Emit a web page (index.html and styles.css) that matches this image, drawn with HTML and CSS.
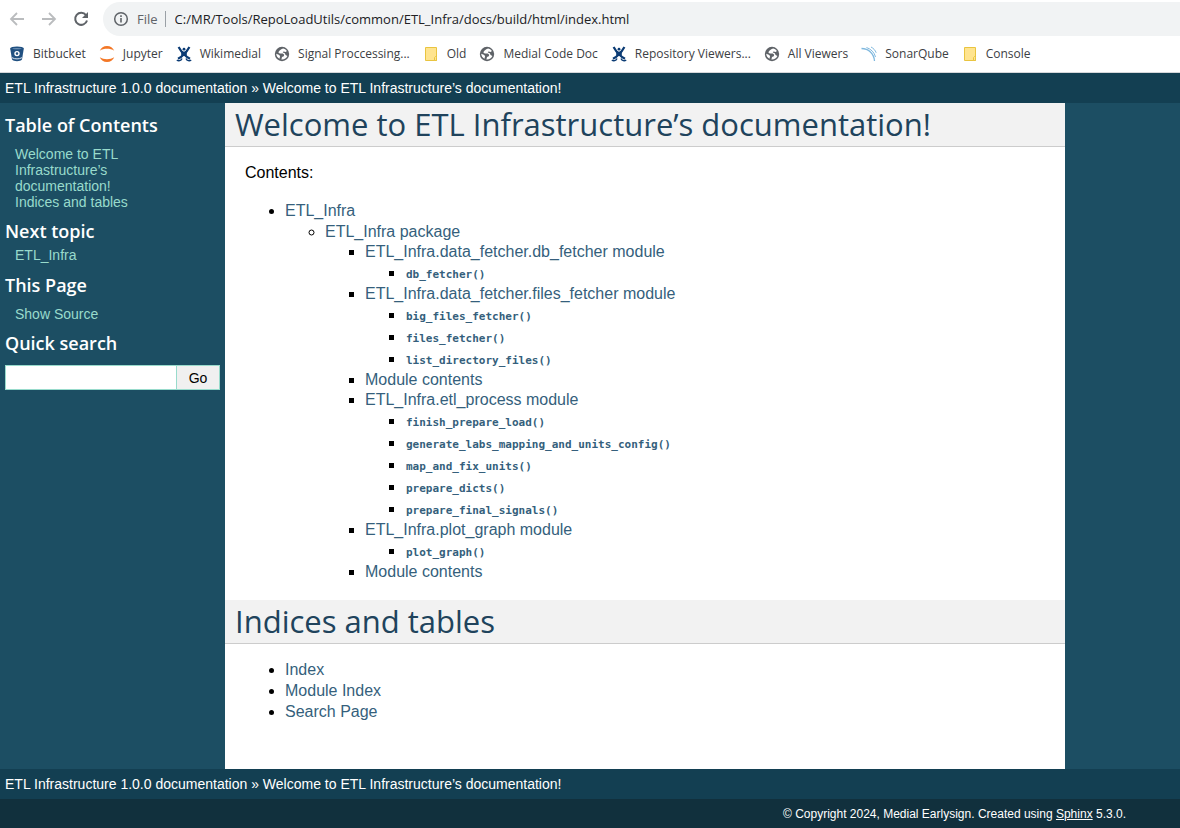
FILE: index.html
```html
<!DOCTYPE html>
<html lang="en">
<head>
<meta charset="utf-8">
<title>Welcome to ETL Infrastructure’s documentation!</title>
<link rel="stylesheet" href="styles.css">
</head>
<body>
<svg class="symbols" aria-hidden="true">
  <symbol id="globe" viewBox="0 0 16 16"><circle cx="8" cy="8" r="7.200" fill="#5f6368"/><path d="M9.200 2.600C7 3 6 4.200 4.800 5.600c-.8 1 .2 2 1.400 2h2.600l1.400 1.200-.4 1.400-1.800.8-.6 2.500c2.800.2 5-1.100 6-3.500L11.600 9l-.8-1.800-2-.6.6-1 2.600.4.8-1.200a6 6 0 0 0-3.600-2.200zM2.200 7.800l2.600.9 1.300 1.300-.6 2.800A6 6 0 0 1 2.200 7.800z" fill="#fff"/></symbol>
  <symbol id="folder" viewBox="0 0 16 16"><path d="M2.500 1.500h11v13h-11z" fill="#ffe48f" stroke="#e9c440"/><path d="M11.500 14.500v-3l1-1 1 1v3z" fill="#ffe48f" stroke="#e9c440"/></symbol>
  <symbol id="wiki" viewBox="0 0 16 16"><circle cx="8" cy="3.200" r="1.400" fill="#0b3b74"/><path d="M2.600 1C4 3.600 5.600 6 8 8.200c1.600 1.700 3.400 3.300 6 4.600M13.400 1C12 3.600 10.400 6 8 8.200 6.400 9.900 4.600 11.500 2 12.800" fill="none" stroke="#0b3b74" stroke-width="2.200"/><path d="M5.200 4.600c1.600 1.400 4 1.400 5.600 0v5.200L8 8.200 5.200 9.800z" fill="#0b3b74"/><path d="M.8 14c1.800 1.400 4.200.8 5.200-1.600M15.200 14c-1.800 1.400-4.200.8-5.200-1.600" fill="none" stroke="#0b3b74" stroke-width="1.400"/></symbol>
</svg>
<header class="browser">
  <div class="toolbar">
    <button class="tool" aria-label="Back"><svg viewBox="0 0 16 16"><path d="M15 8H2M8 2 2 8l6 6" fill="none" stroke="#babcbe" stroke-width="1.800"/></svg></button>
    <button class="tool" aria-label="Forward"><svg viewBox="0 0 16 16"><path d="M1 8h13M8 2l6 6-6 6" fill="none" stroke="#babcbe" stroke-width="1.800"/></svg></button>
    <button class="tool" aria-label="Reload"><svg viewBox="0 0 16 16"><path d="M13 4.200A6 6 0 1 0 14 9.500" fill="none" stroke="#5f6368" stroke-width="2"/><path d="M15 1v6H9z" fill="#5f6368"/></svg></button>
    <div class="address">
      <svg class="info" viewBox="0 0 16 16"><circle cx="8" cy="8" r="6.300" fill="none" stroke="#5f6368" stroke-width="1.500"/><path d="M7.200 7h1.600v4.500H7.200zM7.200 4.300h1.600v1.600H7.200z" fill="#5f6368"/></svg>
      <span class="scheme">File</span>
      <input class="url" type="text" aria-label="Address" value="C:/MR/Tools/RepoLoadUtils/common/ETL_Infra/docs/build/html/index.html">
    </div>
  </div>
  <nav class="bookmarks" aria-label="Bookmarks">
    <a href="#"><svg viewBox="0 0 16 16"><path d="M1.200 2.500 3 13.500c1.500 2.200 8.500 2.200 10 0l1.800-11z" fill="#205081"/><ellipse cx="8" cy="2.500" rx="6.800" ry="2" fill="#205081"/><ellipse cx="8" cy="2.600" rx="4.800" ry=".7" fill="#6d8fb3"/><circle cx="8" cy="7.600" r="2" fill="#205081" stroke="#fff" stroke-width="1.400"/><path d="M3 11.700c3 1.600 7 1.600 10 0" fill="none" stroke="#dbe4ee"/></svg>Bitbucket</a>
    <a href="#"><svg viewBox="0 0 16 16"><path d="M.8 4.800a7.800 7.800 0 0 1 14.400 0C11.500 2.200 4.500 2.200.8 4.800zM.8 11.200a7.800 7.800 0 0 0 14.400 0c-3.700 2.600-10.700 2.600-14.400 0z" fill="#f37726"/></svg>Jupyter</a>
    <a href="#"><svg><use href="#wiki"/></svg>Wikimedial</a>
    <a href="#"><svg><use href="#globe"/></svg>Signal Proccessing...</a>
    <a href="#"><svg><use href="#folder"/></svg>Old</a>
    <a href="#"><svg><use href="#globe"/></svg>Medial Code Doc</a>
    <a href="#"><svg><use href="#wiki"/></svg>Repository Viewers...</a>
    <a href="#"><svg><use href="#globe"/></svg>All Viewers</a>
    <a href="#"><svg viewBox="0 0 16 16"><path d="M.5 2.500c7 0 12.500 5 13 12.500" fill="none" stroke="#7fb8de" stroke-width="1.300"/><path d="M5.500 1.500c4.500 1.500 8 5 9 9.500M10 1c2.500 1.300 4.300 3.300 5.200 5.800" fill="none" stroke="#7fb8de"/></svg>SonarQube</a>
    <a href="#"><svg><use href="#folder"/></svg>Console</a>
  </nav>
</header>
<nav class="related" aria-label="Related"><a href="#">ETL Infrastructure 1.0.0 documentation</a> » <a href="#">Welcome to ETL Infrastructure’s documentation!</a></nav>
<div class="document">
  <aside class="sidebar">
    <h3>Table of Contents</h3>
    <ul>
      <li><a href="#welcome">Welcome to ETL Infrastructure’s documentation!</a></li>
      <li><a href="#indices">Indices and tables</a></li>
    </ul>
    <h4>Next topic</h4>
    <p class="topic"><a href="#">ETL_Infra</a></p>
    <h3>This Page</h3>
    <ul><li><a href="#">Show Source</a></li></ul>
    <h3><label for="q">Quick search</label></h3>
    <form class="search"><input id="q" type="text"><button type="button">Go</button></form>
  </aside>
  <main class="body">
    <section id="welcome">
      <h1>Welcome to ETL Infrastructure’s documentation!</h1>
      <p>Contents:</p>
      <ul>
        <li><a href="#">ETL_Infra</a>
          <ul>
            <li><a href="#">ETL_Infra package</a>
              <ul class="modules">
                <li><a href="#">ETL_Infra.data_fetcher.db_fetcher module</a>
                  <ul class="functions">
                    <li><a href="#"><code>db_fetcher()</code></a></li>
                  </ul>
                </li>
                <li><a href="#">ETL_Infra.data_fetcher.files_fetcher module</a>
                  <ul class="functions">
                    <li><a href="#"><code>big_files_fetcher()</code></a></li>
                    <li><a href="#"><code>files_fetcher()</code></a></li>
                    <li><a href="#"><code>list_directory_files()</code></a></li>
                  </ul>
                </li>
                <li><a href="#">Module contents</a></li>
                <li><a href="#">ETL_Infra.etl_process module</a>
                  <ul class="functions">
                    <li><a href="#"><code>finish_prepare_load()</code></a></li>
                    <li><a href="#"><code>generate_labs_mapping_and_units_config()</code></a></li>
                    <li><a href="#"><code>map_and_fix_units()</code></a></li>
                    <li><a href="#"><code>prepare_dicts()</code></a></li>
                    <li><a href="#"><code>prepare_final_signals()</code></a></li>
                  </ul>
                </li>
                <li><a href="#">ETL_Infra.plot_graph module</a>
                  <ul class="functions">
                    <li><a href="#"><code>plot_graph()</code></a></li>
                  </ul>
                </li>
                <li><a href="#">Module contents</a></li>
              </ul>
            </li>
          </ul>
        </li>
      </ul>
    </section>
    <section id="indices">
      <h1>Indices and tables</h1>
      <ul>
        <li><a href="#">Index</a></li>
        <li><a href="#">Module Index</a></li>
        <li><a href="#">Search Page</a></li>
      </ul>
    </section>
  </main>
</div>
<nav class="related" aria-label="Related, bottom"><a href="#">ETL Infrastructure 1.0.0 documentation</a> » <a href="#">Welcome to ETL Infrastructure’s documentation!</a></nav>
<footer class="footer">© Copyright 2024, Medial Earlysign. Created using <a href="#">Sphinx</a> 5.3.0.</footer>
</body>
</html>
```
FILE: styles.css
```css
* { box-sizing: border-box; }
body {
  margin: 0;
  background: #11303d;
  color: #000;
  font: 16px/21px "Liberation Sans", Arial, sans-serif;
}
a { text-decoration: none; }
.symbols { display: none; }

.browser {
  background: #fff;
  border-bottom: 1px solid #d5d7da;
  font-family: "Open Sans", "Segoe UI", sans-serif;
}
.toolbar {
  display: flex;
  align-items: center;
  gap: 16px;
  padding: 2px 0 0 9px;
}
.tool {
  width: 16px;
  height: 16px;
  padding: 0;
  border: 0;
  background: none;
}
.tool svg { display: block; width: 16px; height: 16px; }
.address {
  flex: 1;
  display: flex;
  align-items: center;
  height: 34px;
  padding-left: 10px;
  margin-left: -2px;
  border-radius: 17px 0 0 17px;
  background: #f1f3f4;
}
.info { width: 16px; height: 16px; }
.scheme {
  margin-left: 8px;
  padding-right: 7px;
  border-right: 1px solid #9aa0a6;
  color: #5f6368;
  font-size: 13px;
  line-height: 16px;
}
.url {
  flex: 1;
  min-width: 0;
  padding: 0 9px;
  border: 0;
  background: none;
  color: #202124;
  font: 13px/20px "Open Sans", "Segoe UI", sans-serif;
}
.bookmarks {
  display: flex;
  height: 36px;
  align-items: center;
  gap: 13px;
  padding-left: 9px;
  overflow: hidden;
}
.bookmarks a {
  display: flex;
  align-items: center;
  gap: 8px;
  color: #3c4043;
  font-size: 12px;
  line-height: 16px;
  white-space: nowrap;
}
.bookmarks svg { width: 16px; height: 16px; flex: none; }

.related {
  padding: 0 5px;
  background: #133f52;
  color: #fff;
  font-size: 14px;
  line-height: 30px;
}
.related a { color: #fff; }

.document {
  display: flex;
  background: #1c4e63;
}
.sidebar {
  flex: none;
  width: 225px;
  padding: 10px 5px 0;
  font-size: 14px;
  line-height: 16px;
}
.sidebar a { color: #98dbcc; }
.sidebar h3, .sidebar h4 {
  margin: 0;
  color: #fff;
  font: 600 18px/24px "Open Sans", "Trebuchet MS", sans-serif;
}
.sidebar ul, .topic {
  margin: 9px 70px 9px 10px;
  padding: 0;
  list-style: none;
}
.topic { margin: 4px 70px 10px 10px; }
.search { display: flex; margin-top: 10px; }
.search input {
  flex: 1;
  min-width: 0;
  height: 25px;
  border: 1px solid #98dbcc;
  background: #fff;
}
.search button {
  width: 44px;
  margin-left: -1px;
  border: 1px solid #98dbcc;
  background: #f0f0f0;
  color: #000;
  font: 14px "Liberation Sans", Arial, sans-serif;
}

.body {
  flex: 1;
  max-width: 840px;
  padding: 0 20px 29px;
  background: #fff;
}
.body h1 {
  margin: 0 -20px 15px;
  padding: 1px 10px 2px;
  border-bottom: 1px solid #ccc;
  background: #f2f2f2;
  color: #20435c;
  font: 31px/40px "Open Sans", "Trebuchet MS", sans-serif;
}
.body p { margin: 0 0 17px; }
.body ul { margin: 0 0 18px; padding-left: 40px; }
.body ul ul { margin: 0; }
.body a { color: #355f7c; }
.modules { line-height: 20px; }
.functions { line-height: 22px; }
.functions code {
  padding: 0 1px;
  font: bold 11px "DejaVu Sans Mono", monospace;
}

.footer {
  padding: 1px 54px 0 5px;
  background: #11303d;
  color: #fff;
  font-size: 12px;
  line-height: 28px;
  text-align: right;
}
.footer a { color: #fff; text-decoration: underline; }
```
